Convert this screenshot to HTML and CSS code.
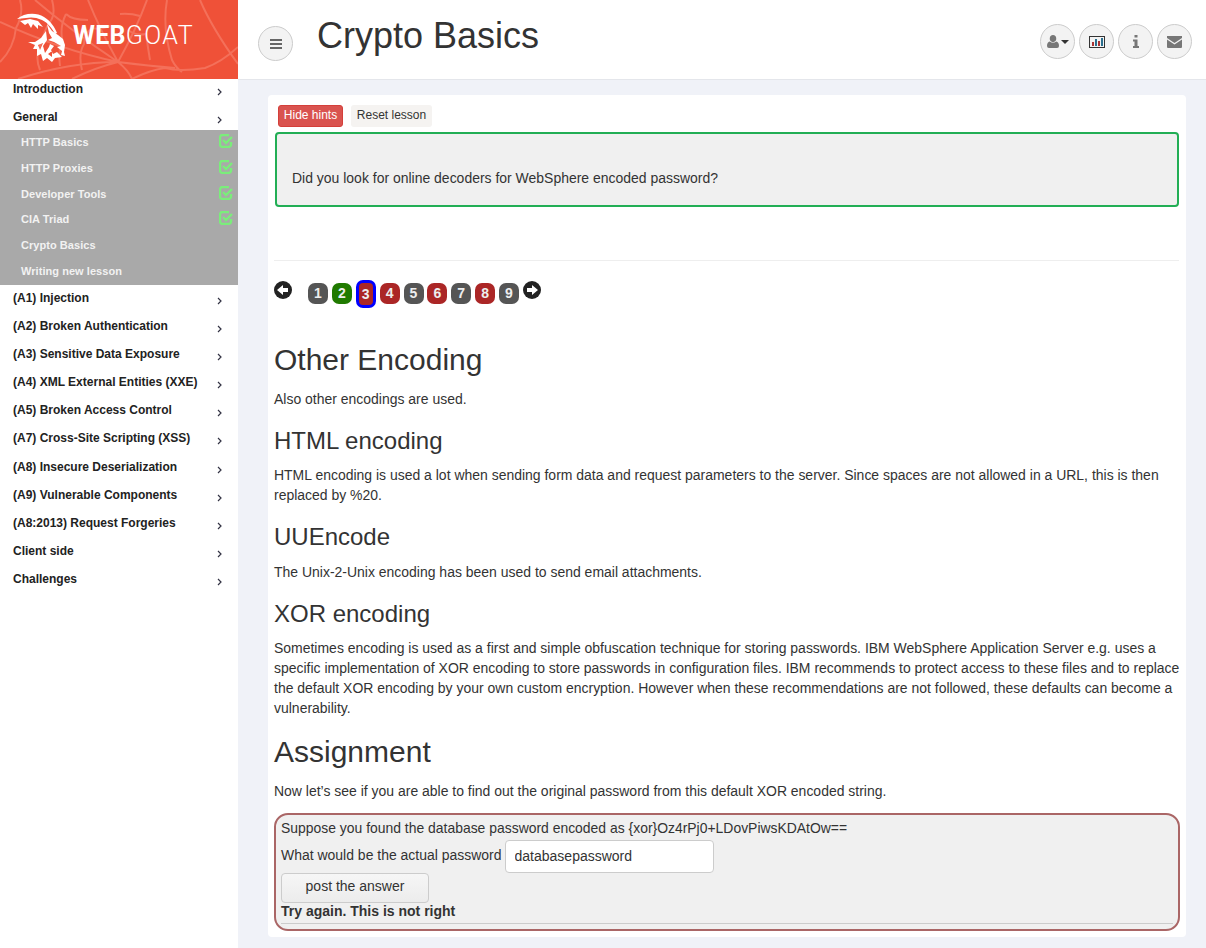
FILE: index.html
```html
<!DOCTYPE html>
<html lang="en">
<head>
<meta charset="utf-8">
<title>WebGoat</title>
<link rel="stylesheet" href="styles.css">
</head>
<body>
<aside class="sidebar">
  <div class="brand">
    <svg class="web" viewBox="0 0 238 79" width="238" height="79" fill="none" stroke="#f4705a" stroke-width="2">
      <path d="M118 62Q60 50 0 22M118 62Q70 30 35 0M118 62Q100 30 88 0M118 62Q136 30 147 0M118 62Q70 62 18 79M118 62Q94 68 72 79M118 62Q128 70 132 79M118 62Q150 66 175 68"/>
      <path d="M167 0Q162 28 172 60Q176 68 182 72M200 0Q212 28 238 64M238 47Q222 62 205 68Q180 72 165 68Q150 70 132 79"/>
      <path d="M0 62Q14 48 16 28Q24 14 20 0M52 0Q56 14 50 22Q44 30 42 42Q34 56 40 70M88 20Q72 20 66 14M66 14Q60 26 62 38Q58 50 60 66M110 26Q100 30 92 28Q84 34 84 44Q78 54 82 70M128 30Q136 36 146 34Q148 48 150 60M120 14Q130 13 140 16"/>
    </svg>
    <svg class="goat" viewBox="0 0 50 50" width="50" height="50">
      <path fill="#fff" d="M0 5C7-1 19-2 27 3C34 7 38 14 40 19L38 20C35 14 31 9 25 6C19 3 13 3 9 4Z"/>
      <path fill="#fff" d="M3 7L13 5L21 7L26 13L21 11L21 15L16 10L14 14L11 9L8 11Z"/>
      <path fill="#fff" d="M30 10L35 17L41 21L46 25L48 31L47 38L48 42L44 41L45 37L40 33L44 32L37 28L31 26L35 24L32 19Z"/>
      <path fill="#fff" fill-rule="evenodd" d="M11 28L18 28L24 24L29 17L30 26L26 32L28 39L32 33L33 30L37 32L34 36L36 40L40 38L45 43L38 44L35 48L30 44L26 47L24 40L20 42L20 35L16 35L18 31ZM21 31L26 29L23 36ZM31 40L35 37L35 43Z"/>
    </svg>
    <span class="wordmark"><b>WEB</b>GOAT</span>
  </div>
  <nav class="menu">
    <a class="top first">Introduction<svg class="chev" viewBox="0 0 6 8" width="6" height="8"><path d="M1 1l3 3-3 3" fill="none" stroke="#334" stroke-width="1.2"/></svg></a>
    <a class="top second">General<svg class="chev" viewBox="0 0 6 8" width="6" height="8"><path d="M1 1l3 3-3 3" fill="none" stroke="#334" stroke-width="1.2"/></svg></a>
    <div class="group">
      <a class="sub">HTTP Basics<svg class="check" viewBox="0 0 14 14" width="14" height="14"><path d="M12 8v2.500A2.500 2.500 0 0 1 9.500 13h-6A2.500 2.500 0 0 1 1 10.500v-7A2.500 2.500 0 0 1 3.500 1H10M4 6l3 3 6-6" fill="none" stroke="#7bed7b" stroke-width="2.400"/></svg></a>
      <a class="sub">HTTP Proxies<svg class="check" viewBox="0 0 14 14" width="14" height="14"><path d="M12 8v2.500A2.500 2.500 0 0 1 9.500 13h-6A2.500 2.500 0 0 1 1 10.500v-7A2.500 2.500 0 0 1 3.500 1H10M4 6l3 3 6-6" fill="none" stroke="#7bed7b" stroke-width="2.400"/></svg></a>
      <a class="sub">Developer Tools<svg class="check" viewBox="0 0 14 14" width="14" height="14"><path d="M12 8v2.500A2.500 2.500 0 0 1 9.500 13h-6A2.500 2.500 0 0 1 1 10.500v-7A2.500 2.500 0 0 1 3.500 1H10M4 6l3 3 6-6" fill="none" stroke="#7bed7b" stroke-width="2.400"/></svg></a>
      <a class="sub">CIA Triad<svg class="check" viewBox="0 0 14 14" width="14" height="14"><path d="M12 8v2.500A2.500 2.500 0 0 1 9.500 13h-6A2.500 2.500 0 0 1 1 10.500v-7A2.500 2.500 0 0 1 3.500 1H10M4 6l3 3 6-6" fill="none" stroke="#7bed7b" stroke-width="2.400"/></svg></a>
      <a class="sub">Crypto Basics</a>
      <a class="sub">Writing new lesson</a>
    </div>
    <a class="top">(A1) Injection<svg class="chev" viewBox="0 0 6 8" width="6" height="8"><path d="M1 1l3 3-3 3" fill="none" stroke="#334" stroke-width="1.2"/></svg></a>
    <a class="top">(A2) Broken Authentication<svg class="chev" viewBox="0 0 6 8" width="6" height="8"><path d="M1 1l3 3-3 3" fill="none" stroke="#334" stroke-width="1.2"/></svg></a>
    <a class="top">(A3) Sensitive Data Exposure<svg class="chev" viewBox="0 0 6 8" width="6" height="8"><path d="M1 1l3 3-3 3" fill="none" stroke="#334" stroke-width="1.2"/></svg></a>
    <a class="top">(A4) XML External Entities (XXE)<svg class="chev" viewBox="0 0 6 8" width="6" height="8"><path d="M1 1l3 3-3 3" fill="none" stroke="#334" stroke-width="1.2"/></svg></a>
    <a class="top">(A5) Broken Access Control<svg class="chev" viewBox="0 0 6 8" width="6" height="8"><path d="M1 1l3 3-3 3" fill="none" stroke="#334" stroke-width="1.2"/></svg></a>
    <a class="top">(A7) Cross-Site Scripting (XSS)<svg class="chev" viewBox="0 0 6 8" width="6" height="8"><path d="M1 1l3 3-3 3" fill="none" stroke="#334" stroke-width="1.2"/></svg></a>
    <a class="top">(A8) Insecure Deserialization<svg class="chev" viewBox="0 0 6 8" width="6" height="8"><path d="M1 1l3 3-3 3" fill="none" stroke="#334" stroke-width="1.2"/></svg></a>
    <a class="top">(A9) Vulnerable Components<svg class="chev" viewBox="0 0 6 8" width="6" height="8"><path d="M1 1l3 3-3 3" fill="none" stroke="#334" stroke-width="1.2"/></svg></a>
    <a class="top">(A8:2013) Request Forgeries<svg class="chev" viewBox="0 0 6 8" width="6" height="8"><path d="M1 1l3 3-3 3" fill="none" stroke="#334" stroke-width="1.2"/></svg></a>
    <a class="top">Client side<svg class="chev" viewBox="0 0 6 8" width="6" height="8"><path d="M1 1l3 3-3 3" fill="none" stroke="#334" stroke-width="1.2"/></svg></a>
    <a class="top">Challenges<svg class="chev" viewBox="0 0 6 8" width="6" height="8"><path d="M1 1l3 3-3 3" fill="none" stroke="#334" stroke-width="1.2"/></svg></a>
  </nav>
</aside>
<div class="main">
  <header class="topbar">
    <button class="round menu-toggle"><svg viewBox="0 0 12 10" width="12" height="10"><path d="M0 1h12M0 5h12M0 9h12" stroke="#666" stroke-width="2"/></svg></button>
    <h1>Crypto Basics</h1>
    <div class="tools">
      <button class="round"><svg viewBox="0 0 12 13" width="12" height="13"><path fill="#777" d="M6 0a3.200 3.200 0 0 1 3.200 3.500A3.200 3.200 0 0 1 6 7.200 3.200 3.200 0 0 1 2.800 3.500 3.200 3.200 0 0 1 6 0zM2.800 6.500Q6 9 9.200 6.500 12 7 12 11q0 2-2 2H2q-2 0-2-2 0-4 2.800-4.500z"/></svg><i class="caret"></i></button>
      <button class="round"><svg viewBox="0 0 16 12" width="16" height="12"><path fill="#333" d="M0 0h16v12H0zM1 1v10h14V1z"/><path fill="#a33" d="M3 6h2v4H3zM9 5h2v5H9z"/><path fill="#2a6f8f" d="M6 3h2v7H6zM12 2h2v8h-2z"/></svg></button>
      <button class="round"><svg viewBox="0 0 6 13" width="6" height="13"><path fill="#777" d="M1.500 0h3v2.500h-3zM0 4.500h4.500V11H6v2H0v-2h1.500V6.500H0z"/></svg></button>
      <button class="round"><svg viewBox="0 0 15 12" width="15" height="12"><path fill="#777" d="M0 0h15v2L7.500 7 0 2zM0 3.500 7.500 8.500 15 3.500V11a1 1 0 0 1-1 1H1a1 1 0 0 1-1-1z"/></svg></button>
    </div>
  </header>
  <main class="content">
    <section class="card">
      <div class="hint-actions">
        <button class="btn-hide">Hide hints</button>
        <button class="btn-reset">Reset lesson</button>
      </div>
      <div class="hint">Did you look for online decoders for WebSphere encoded password?</div>
      <hr class="rule">
      <div class="pager">
        <svg class="arrow" viewBox="0 0 18 18" width="18" height="18"><circle cx="9" cy="9" r="9" fill="#222"/><path fill="#fff" d="M9 4v3h5v4H9v3L3 9z"/></svg>
        <div class="pages">
          <span class="pg grey">1</span><span class="pg green">2</span><span class="pg red current">3</span><span class="pg red">4</span><span class="pg grey">5</span><span class="pg red">6</span><span class="pg grey">7</span><span class="pg red">8</span><span class="pg grey">9</span>
        </div>
        <svg class="arrow next" viewBox="0 0 18 18" width="18" height="18"><circle cx="9" cy="9" r="9" fill="#222"/><path fill="#fff" d="M9 4v3H4v4h5v3l6-5z"/></svg>
      </div>
      <article class="lesson">
        <h2>Other Encoding</h2>
        <p>Also other encodings are used.</p>
        <h3>HTML encoding</h3>
        <p>HTML encoding is used a lot when sending form data and request parameters to the server. Since spaces are not allowed in a URL, this is then replaced by %20.</p>
        <h3>UUEncode</h3>
        <p>The Unix-2-Unix encoding has been used to send email attachments.</p>
        <h3>XOR encoding</h3>
        <p>Sometimes encoding is used as a first and simple obfuscation technique for storing passwords. IBM WebSphere Application Server e.g. uses a specific implementation of XOR encoding to store passwords in configuration files. IBM recommends to protect access to these files and to replace the default XOR encoding by your own custom encryption. However when these recommendations are not followed, these defaults can become a vulnerability.</p>
        <h2>Assignment</h2>
        <p>Now let’s see if you are able to find out the original password from this default XOR encoded string.</p>
      </article>
      <form class="attack">
        <div class="line">Suppose you found the database password encoded as {xor}Oz4rPj0+LDovPiwsKDAtOw==</div>
        <div class="answer"><label for="pw">What would be the actual password</label><input id="pw" value="databasepassword"></div>
        <button type="button" class="post">post the answer</button>
        <div class="feedback">Try again. This is not right</div>
        <hr class="inner">
      </form>
    </section>
  </main>
</div>
</body>
</html>
```
FILE: styles.css
```css
* { box-sizing: border-box; }
html, body { margin: 0; height: 100%; }
body {
  display: flex;
  height: 948px;
  overflow: hidden;
  font-family: "Liberation Sans", Arial, sans-serif;
  font-size: 14px;
  color: #333;
  background: #f0f2f8;
}
.sidebar { width: 238px; flex: none; background: #fff; height: 948px; }
.brand {
  position: relative;
  height: 79px;
  background: #ef5138;
  overflow: hidden;
  display: flex;
  align-items: flex-start;
}
.web { position: absolute; left: 0; top: 0; }
.goat { position: relative; margin: 14px 0 0 17px; overflow: visible; flex: none; }
.wordmark {
  position: relative;
  margin: 21px 0 0 6px;
  color: #fff;
  font-family: Roboto, "Liberation Sans", sans-serif;
  font-size: 25px;
  line-height: 30px;
  font-weight: 300;
  letter-spacing: 1.4px;
}
.wordmark b { font-weight: 700; letter-spacing: 0.3px; }
.menu { display: flex; flex-direction: column; }
.top {
  position: relative;
  display: block;
  height: 28.1px;
  padding: 6px 0 0 13px;
  font-size: 12px;
  line-height: 14px;
  font-weight: 700;
  color: #222;
}
.top.first { height: 25px; padding-top: 3px; }
.top.second { height: 26px; padding-top: 6px; }
.chev { position: absolute; left: 217px; top: 12px; }
.top.first .chev { top: 9px; }
.group { background: #a9a9a9; height: 155px; }
.sub {
  position: relative;
  display: block;
  height: 25.8px;
  padding: 6px 0 0 21px;
  font-size: 11px;
  line-height: 13px;
  font-weight: 700;
  letter-spacing: 0.05px;
  color: #f2f2f2;
}
.check { position: absolute; left: 219px; top: 4px; }
.main { flex: 1; min-width: 0; display: flex; flex-direction: column; }
.topbar {
  height: 80px;
  flex: none;
  background: #fff;
  border-bottom: 1px solid #e4e6eb;
  display: flex;
  align-items: flex-start;
  position: relative;
  padding-left: 20px;
}
.round {
  width: 35px;
  height: 35px;
  border-radius: 50%;
  border: 1px solid #ccc;
  background: #f3f3f3;
  padding: 0;
  display: inline-flex;
  align-items: center;
  justify-content: center;
}
.menu-toggle { margin-top: 26px; flex: none; }
h1 {
  margin: 14px 0 0 24px;
  font-size: 36px;
  line-height: 44px;
  font-weight: 400;
  color: #333;
}
.tools { margin-left: auto; margin-right: 14px; margin-top: 24px; display: flex; gap: 4px; }
.caret {
  width: 0;
  height: 0;
  margin-left: 2px;
  border-left: 4px solid transparent;
  border-right: 4px solid transparent;
  border-top: 4px solid #333;
}
.content { padding: 15px 20px 0 30px; }
.card {
  background: #fff;
  height: 842px;
  border-radius: 4px;
  padding: 10px 7px 0 6px;
}
.hint-actions { display: flex; gap: 8px; padding-left: 4px; height: 22px; }
.btn-hide, .btn-reset {
  height: 22px;
  padding: 0 0 2px;
  font: 12px/18px "Liberation Sans", Arial, sans-serif;
  border-radius: 3px;
  border: 1px solid transparent;
  white-space: nowrap;
}
.btn-hide { background: #d9534f; border-color: #d43f3a; color: #fff; width: 65px; }
.btn-reset { background: #f5f3f1; color: #333; width: 81px; }
.hint {
  margin: 5px 0 0 1px;
  height: 75px;
  background: #f0f0f0;
  border: 2px solid #22ae55;
  border-radius: 4px;
  padding: 34px 0 0 15px;
  font-size: 13.97px;
  line-height: 20px;
}
.rule { margin: 53px 0 0 0; border: 0; border-top: 1px solid #eee; }
.pager { display: flex; height: 65px; padding-top: 20px; align-items: flex-start; }
.arrow { flex: none; }
.arrow.next { margin-left: 3.900px; }
.pages { display: flex; margin: 2px 0 0 16px; gap: 3.880px; }
.pg {
  width: 20px;
  height: 21px;
  border-radius: 7px;
  color: #eee;
  font-weight: 700;
  font-size: 14px;
  line-height: 21px;
  text-align: center;
}
.grey { background: #555; }
.green { background: #207a00; }
.red { background: #ab2626; }
.current { border: 3px solid #0000ff; height: 28px; margin-top: -3px; line-height: 22px; border-radius: 7px; }
.lesson { margin-right: -2px; }
.lesson h2 { font-size: 30px; line-height: 33px; font-weight: 400; margin: 17px 0 13px; }
.lesson h3 { font-size: 24px; line-height: 26.4px; font-weight: 400; margin: 19px 0 11px; }
.lesson p { margin: 0 0 10px; font-size: 13.97px; line-height: 20px; }
.attack {
  margin-top: 12px;
  height: 118px;
  margin-right: -1px;
  background: #f0f0f0;
  border: 2px solid #a66;
  border-radius: 14px;
  padding: 3px 5px 0;
  line-height: 20px;
}
.line { font-size: 13.93px; }
.answer { display: flex; align-items: flex-start; height: 33px; margin-top: 2px; font-size: 13.97px; }
.answer label { line-height: 30px; }
.answer input {
  margin-left: 3px;
  width: 209px;
  height: 33px;
  border: 1px solid #ccc;
  border-radius: 4px;
  padding: 0 8px 2px 9px;
  font: 14px "Liberation Sans", Arial, sans-serif;
  color: #333;
  background: #fff;
}
.post {
  display: block;
  width: 148px;
  height: 30px;
  padding: 0 0 4px;
  background: linear-gradient(#f6f6f6, #ececec);
  border: 1px solid #ccc;
  border-radius: 4px;
  font: 14px "Liberation Sans", Arial, sans-serif;
  color: #333;
}
.feedback { font-weight: 700; line-height: 17px; }
.inner { margin: 3px 0 0; border: 0; border-top: 1px solid #ccc; }
```
